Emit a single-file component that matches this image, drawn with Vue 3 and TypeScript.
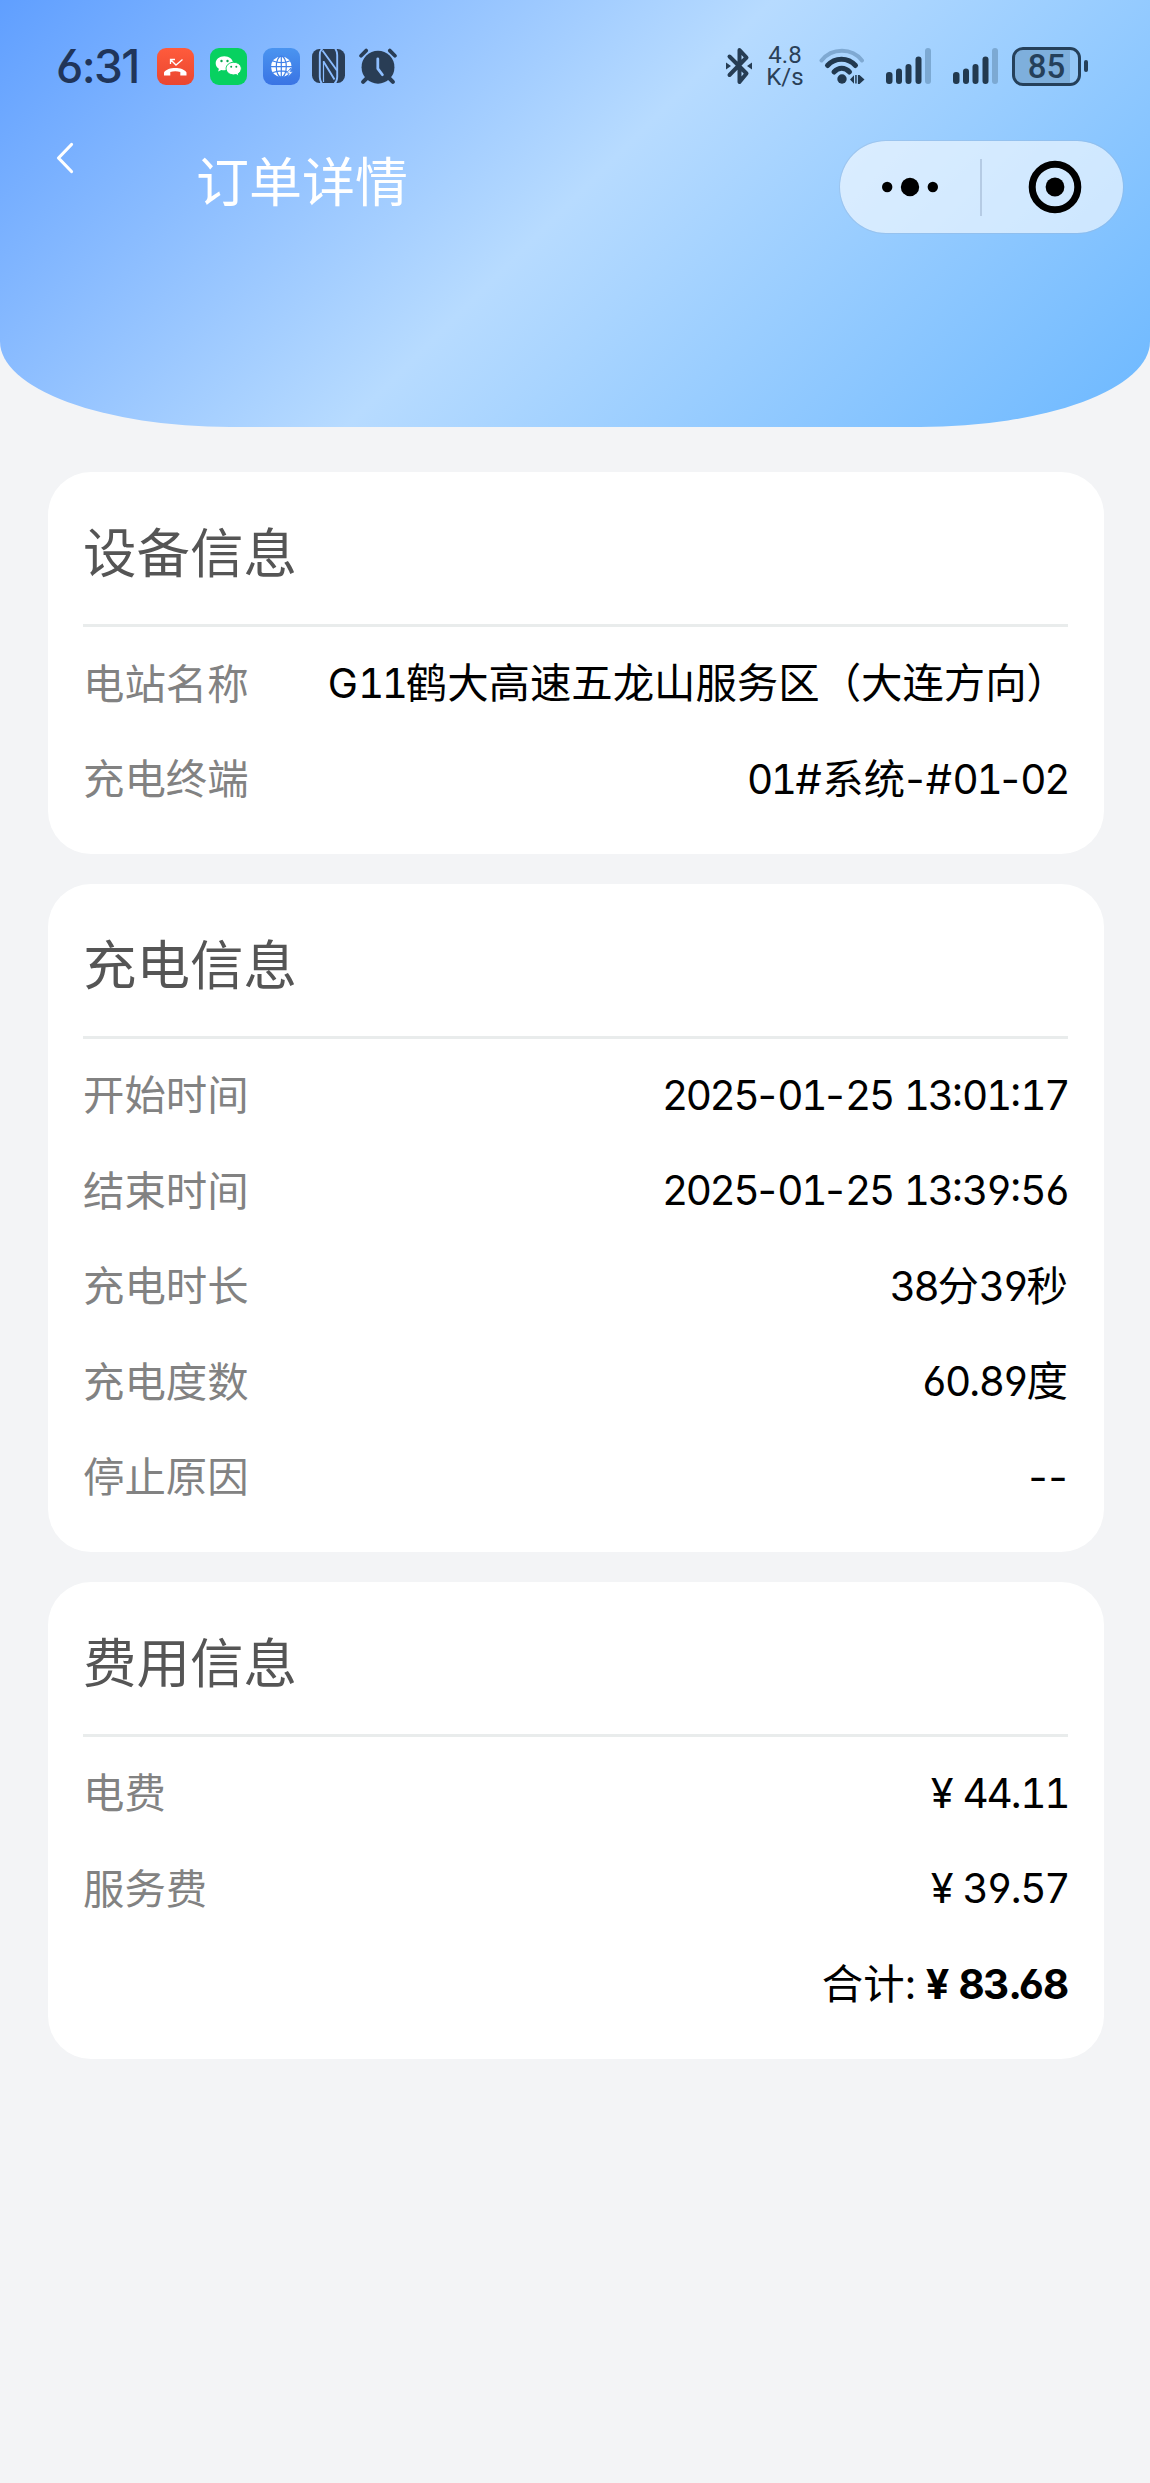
<script setup lang="ts">
interface Row {
  label: string
  value: string
}
interface Section {
  title: string
  rows: Row[]
}
interface Segment {
  text: string
  kind: string
}

const sections: Section[] = [
  {
    title: '设备信息',
    rows: [
      { label: '电站名称', value: 'G11鹤大高速五龙山服务区（大连方向）' },
      { label: '充电终端', value: '01#系统-#01-02' },
    ],
  },
  {
    title: '充电信息',
    rows: [
      { label: '开始时间', value: '2025-01-25 13:01:17' },
      { label: '结束时间', value: '2025-01-25 13:39:56' },
      { label: '充电时长', value: '38分39秒' },
      { label: '充电度数', value: '60.89度' },
      { label: '停止原因', value: '--' },
    ],
  },
  {
    title: '费用信息',
    rows: [
      { label: '电费', value: '¥44.11' },
      { label: '服务费', value: '¥39.57' },
    ],
  },
]
const total = '¥83.68'
const signals = [1, 2]

const symbolKinds: Record<string, string> = {
  '¥': 'yen',
  '-': 'dash',
  ':': 'colon',
  '.': 'dot',
  '#': 'hash',
  ' ': 'gap',
}

// Digits share one advance; symbols and full-width characters are spaced on their own
function segments(value: string): Segment[] {
  return (value.match(/[¥:.# -]|[A-Z]+|[0-9]+|[^\x20-\x7e¥]+/g) ?? []).map((text) => ({
    text,
    kind: symbolKinds[text] ?? (/^[0-9]/.test(text) ? 'digits' : /^[A-Z]/.test(text) ? 'latin' : 'han'),
  }))
}
</script>

<template>
  <div class="page">
    <header class="hero">
      <div class="status">
        <div class="status-left">
          <span class="clock">6:31</span>
          <svg class="app" viewBox="0 0 37 37">
            <defs>
              <linearGradient id="g-red" x1="0" y1="0" x2="0" y2="1">
                <stop offset="0" stop-color="#ff5b3c" /><stop offset="1" stop-color="#ea4630" />
              </linearGradient>
            </defs>
            <rect width="37" height="37" rx="9" fill="url(#g-red)" />
            <path d="M13.500 16v-4.500h4.500M13.700 11.700l5.300 5.300 6.500-5.500" fill="none" stroke="#fff" stroke-width="1.300" />
            <path d="M7 27.500v-3c2-3.300 6.500-4.500 11.300-4.500s9.200 1.200 11.200 4.500v3h-6.200v-3.600c-3.300-.9-6.700-.9-10 0v3.600z" fill="#fff" />
          </svg>
          <svg class="app" viewBox="0 0 37 37">
            <rect width="37" height="37" rx="9" fill="#07d160" />
            <path d="M14.300 8.300c-5 0-8.600 3.200-8.600 7 0 2.300 1.200 4.200 3.200 5.500l-.8 2.700 3.200-1.600c1 .3 2 .4 3 .4 5 0 8.700-3.100 8.700-7s-3.700-7-8.700-7z" fill="#fff" />
            <path d="M23.700 14.300c-4.400 0-7.600 2.800-7.600 6.300s3.200 6.300 7.600 6.300c.9 0 1.700-.1 2.500-.3l2.700 1.400-.6-2.400c1.900-1.200 3-3 3-5 0-3.500-3.200-6.300-7.600-6.300z" fill="#fff" stroke="#07d160" stroke-width="1" />
            <g fill="#07a44e"><circle cx="11.500" cy="13" r="1.200" /><circle cx="17.500" cy="13" r="1.200" /><circle cx="21.200" cy="18.700" r="1" /><circle cx="26.300" cy="18.700" r="1" /></g>
          </svg>
          <svg class="app" viewBox="0 0 37 37">
            <defs>
              <linearGradient id="g-blue" x1="0" y1="0" x2="0" y2="1">
                <stop offset="0" stop-color="#4a94f0" /><stop offset="1" stop-color="#3a74e4" />
              </linearGradient>
            </defs>
            <rect width="37" height="37" rx="9" fill="url(#g-blue)" />
            <circle cx="18.300" cy="18.700" r="10.300" fill="#fff" />
            <g fill="none" stroke="#3f80e9" stroke-width="1.200">
              <ellipse cx="18.300" cy="18.700" rx="5" ry="10.500" />
              <path d="M18.300 8v22M8 18.700h21M10 13c5 2 11.600 2 16.600 0M10 24.500c5-2 11.600-2 16.600 0" />
            </g>
            <path d="M27.800 20l-4.300 5h2.700l-1.500 4.200 5.300-5.600h-3z" fill="#fff" stroke="#3f80e9" stroke-width=".8" />
          </svg>
          <svg class="nfc" viewBox="0 0 33 34">
            <rect width="33" height="34" rx="7.500" fill="#2a3d55" />
            <g fill="none" stroke="#8bbcff" stroke-width="1.900">
              <path d="M10.500 -.5Q7.800 1.500 7.800 6v22q0 3.500 2 6.500" />
              <path d="M22.500 34.500Q25.200 32.500 25.200 28V6q0-3.500-2-6.500" />
              <path d="M10.500 1.500l14.500 20M11.500 12.500L22.500 30.500" />
              <path d="M11.500 12v21" stroke-width="1.200" />
            </g>
          </svg>
          <svg class="alarm" viewBox="0 0 37 36">
            <g stroke="#293d55" stroke-linecap="round">
              <path d="M2 7.500l5-5M35 7.500l-5-5" stroke-width="3.600" />
              <path d="M8 29l-4 4M29 29l4 4" stroke-width="4" />
            </g>
            <circle cx="18.500" cy="18.700" r="16" fill="#293d55" />
            <path d="M18.300 10.500v9.500l4.500 6" fill="none" stroke="#8fbfff" stroke-width="2.700" stroke-linecap="round" stroke-linejoin="round" />
          </svg>
        </div>

        <div class="status-right">
          <svg class="bluetooth" viewBox="0 0 26 38">
            <g fill="none" stroke="#263d54" stroke-width="4" stroke-linecap="round" stroke-linejoin="round">
              <path d="M3.500 9.500l17 17-7 8.500V3l7 7.500-17 17.500" />
            </g>
            <path d="M0 15.500l5 3.500-5 3.500zM26 15.500l-5 3.500 5 3.500z" fill="#263d54" />
          </svg>
          <div class="speed"><span>4.8</span><span>K/s</span></div>
          <svg class="wifi" viewBox="0 0 46 37">
            <g fill="none" stroke-linecap="round">
              <path d="M2.500 12.500C13-.5 33-.5 43 12.500" stroke="#7fa9d2" stroke-width="4" />
              <path d="M8.500 17.500C16 9 29 9 36.500 17.500" stroke="#22394f" stroke-width="5" />
              <path d="M15 24C19.500 19 26 19 30.500 24" stroke="#22394f" stroke-width="5" />
            </g>
            <circle cx="23" cy="31" r="4.700" fill="#22394f" />
            <path d="M31 31.500l4-4.300v8.500zM45.500 31.500l-5-4.500v9zM36.200 27h1.500v8.500h-1.500zM38.900 27h1.600v9h-1.600z" fill="#22394f" />
          </svg>
          <svg v-for="n in signals" :key="n" class="signal" viewBox="0 0 45 36">
            <g fill="#22394f">
              <rect x="0" y="24" width="6.500" height="12" rx="3" /><rect x="10" y="20.500" width="6" height="15.500" rx="3" />
              <rect x="19.500" y="16" width="6" height="20" rx="3" /><rect x="29.500" y="8.500" width="6" height="27.500" rx="3" />
            </g>
            <rect x="39" y="0" width="6" height="36" rx="3" fill="#7ca9d3" />
          </svg>
          <div class="battery"><span class="battery-body">85</span><i class="battery-tip"></i></div>
        </div>
      </div>

      <div class="nav">
        <svg class="back" viewBox="0 0 18 32">
          <path d="M15.500 2.500L2.500 16l13 13.500" fill="none" stroke="#fff" stroke-width="3.200" stroke-linecap="round" stroke-linejoin="round" />
        </svg>
        <h1 class="nav-title">订单详情</h1>
        <div class="capsule">
          <svg class="dots" viewBox="0 0 56 20">
            <circle cx="5.200" cy="10" r="5.200" /><circle cx="28" cy="10" r="9.200" /><circle cx="50.800" cy="10" r="5.200" />
          </svg>
          <i class="capsule-line"></i>
          <svg class="ring" viewBox="0 0 54 54">
            <circle cx="27" cy="27" r="22.800" fill="none" stroke="#000" stroke-width="7" /><circle cx="27" cy="27" r="9.400" />
          </svg>
        </div>
      </div>
    </header>

    <main class="cards">
      <section v-for="(section, i) in sections" :key="section.title" class="card">
        <h2 class="card-title">{{ section.title }}</h2>
        <div v-for="row in section.rows" :key="row.label" class="row">
          <span class="label">{{ row.label }}</span>
          <span class="value"><span v-for="(s, k) in segments(row.value)" :key="k" :class="s.kind">{{ s.text }}</span></span>
        </div>
        <div v-if="i === sections.length - 1" class="row sum">
          <span class="value">合计:</span>
          <span class="value strong"><span v-for="(s, k) in segments(total)" :key="k" :class="s.kind">{{ s.text }}</span></span>
        </div>
      </section>
    </main>
  </div>
</template>

<style>
body {
  background: #f3f4f6;
}
</style>

<style scoped>
.page {
  min-height: 2483px;
  background: #f3f4f6;
  font-family: Inter, "Noto Sans CJK SC", sans-serif;
}
svg {
  display: block;
  flex: none;
}
.hero {
  box-sizing: border-box;
  height: 427px;
  border-radius: 0 0 20% 20%;
  background: linear-gradient(135deg, #609fff 0%, #b7dbff 49%, #6cb8ff 100%);
}
.status {
  display: flex;
  justify-content: space-between;
  align-items: center;
  height: 132px;
  padding: 0 62px 0 56px;
}
.status-left,
.status-right {
  display: flex;
  align-items: center;
}
.clock {
  width: 101px;
  font-size: 46px;
  font-weight: 500;
  line-height: 1;
  letter-spacing: -1.600px;
  color: #20355a;
  font-feature-settings: "cv03", "cv04";
}
.app {
  width: 37px;
  height: 37px;
  margin-right: 16px;
}
.nfc {
  width: 33px;
  height: 34px;
  margin: 0 14px 0 -4px;
}
.alarm {
  width: 38px;
  height: 37px;
}
.bluetooth {
  width: 26px;
  height: 38px;
}
.speed {
  display: flex;
  flex-direction: column;
  gap: 1px;
  width: 38px;
  margin: 0 15px 0 14px;
  font: 400 24px/21px Roboto, sans-serif;
  text-align: center;
  color: #2a4058;
}
.wifi {
  width: 46px;
  height: 37px;
  margin-right: 21px;
}
.signal {
  width: 45px;
  height: 36px;
  margin-right: 22px;
}
.signal + .battery {
  margin-left: -8px;
}
.battery {
  display: flex;
  align-items: center;
}
.battery-body {
  box-sizing: border-box;
  width: 69px;
  height: 39px;
  border: 3px solid #25405a;
  border-radius: 11px;
  background: linear-gradient(90deg, #7eafdc 0 88%, #95c8f7 88%) padding-box;
  font: 500 33px/34px Roboto, sans-serif;
  text-align: center;
  color: #25405a;
}
.battery-tip {
  width: 4px;
  height: 12px;
  margin-left: 3px;
  border-radius: 2px;
  background: #25405a;
}
.nav {
  display: flex;
  align-items: flex-start;
  padding: 8px 26px 0 56px;
}
.back {
  width: 18px;
  height: 32px;
  margin-top: 2px;
}
.nav-title {
  margin: 5px auto 0 122px;
  font-size: 53px;
  font-weight: 400;
  line-height: 76px;
  color: #fff;
}
.capsule {
  box-sizing: border-box;
  display: flex;
  align-items: center;
  width: 285px;
  height: 94px;
  padding-left: 42px;
  border: 1px solid rgba(150, 180, 215, 0.4);
  border-radius: 47px;
  background: rgba(255, 255, 255, 0.6);
  background-clip: padding-box;
}
.dots {
  width: 56px;
  height: 20px;
}
.capsule-line {
  width: 2px;
  height: 57px;
  margin: 0 46px 0 42px;
  background: #b5cbe4;
}
.ring {
  width: 54px;
  height: 54px;
}
.cards {
  display: flex;
  flex-direction: column;
  gap: 30px;
  padding: 45px 46px 0 48px;
}
.card {
  padding: 0 36px 27.500px 35px;
  border-radius: 43px;
  background: #fff;
}
.card-title {
  margin: 0 0 8px;
  padding-top: 16px;
  height: 136px;
  border-bottom: 3px solid #e9ecec;
  font-size: 53.500px;
  font-weight: 400;
  line-height: 132px;
  color: #555;
}
.row {
  box-sizing: border-box;
  display: flex;
  justify-content: space-between;
  align-items: center;
  height: 95.500px;
  padding-top: 1.500px;
  font-size: 41.400px;
  line-height: 60px;
  white-space: pre;
}
.label {
  color: #828282;
}
.value {
  color: #000;
}
.digits,
.latin {
  font-size: 40.500px;
}
.digits {
  letter-spacing: -2.400px;
  font-feature-settings: "tnum", "cv03", "cv04";
}
.yen,
.dash,
.colon,
.dot,
.hash,
.gap {
  display: inline-block;
  text-align: center;
}
.yen {
  width: 41px;
}
.dash {
  width: 20px;
}
.colon {
  width: 10.500px;
  font-feature-settings: "case";
}
.dot {
  width: 10px;
}
.hash {
  width: 27.500px;
}
.gap {
  width: 11px;
}
.sum {
  justify-content: flex-end;
}
.strong {
  font-weight: 700;
}
.strong .yen {
  width: 42px;
}
.strong .digits {
  letter-spacing: -1.300px;
}
</style>
